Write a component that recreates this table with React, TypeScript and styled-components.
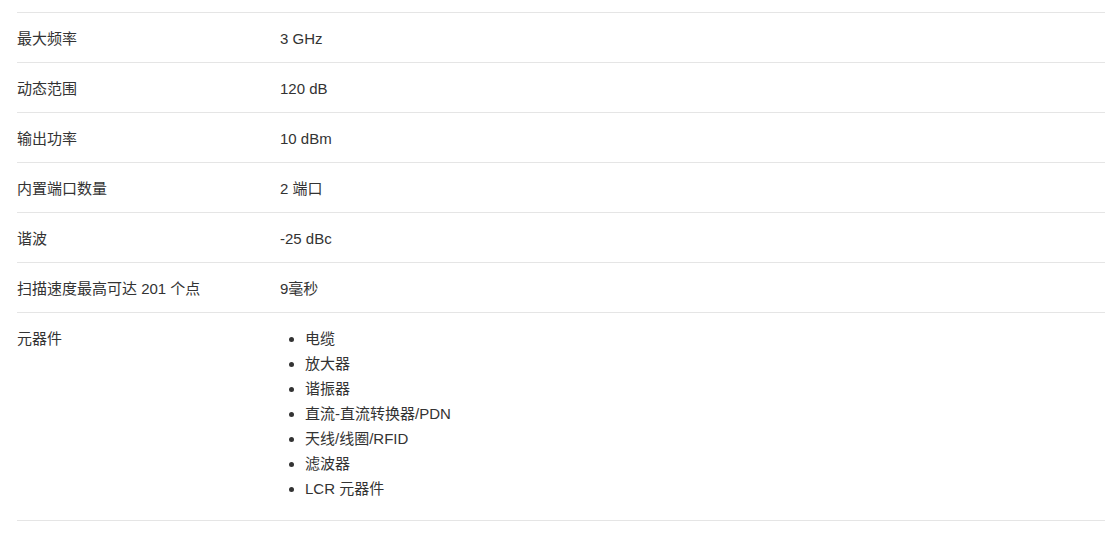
import styled, { createGlobalStyle } from 'styled-components';

const specs = [
  { label: '最大频率', value: '3 GHz' },
  { label: '动态范围', value: '120 dB' },
  { label: '输出功率', value: '10 dBm' },
  { label: '内置端口数量', value: '2 端口' },
  { label: '谐波', value: '-25 dBc' },
  { label: '扫描速度最高可达 201 个点', value: '9毫秒' },
];

const parts = ['电缆', '放大器', '谐振器', '直流-直流转换器/PDN', '天线/线圈/RFID', '滤波器', 'LCR 元器件'];

const GlobalStyle = createGlobalStyle`
  body {
    margin: 0;
    background: #ffffff;
    font-family: 'Liberation Sans', Arial, 'Noto Sans CJK SC', sans-serif;
    color: #333333;
  }
`;

export default function App() {
  return (
    <>
      <GlobalStyle />
      <Page>
        <Table>
          {specs.map((s) => (
            <Row key={s.label}>
              <Label>{s.label}</Label>
              <Value>{s.value}</Value>
            </Row>
          ))}
          <Row>
            <Label>元器件</Label>
            <Value>
              <List>
                {parts.map((p) => (
                  <li key={p}>{p}</li>
                ))}
              </List>
            </Value>
          </Row>
        </Table>
      </Page>
    </>
  );
}

const Page = styled.div`
  padding: 12px 0 0 17px;
`;

const Table = styled.div`
  display: flex;
  flex-direction: column;
  border-top: 1px solid #e5e5e5;
`;

const Row = styled.div`
  display: grid;
  grid-template-columns: 263px 1fr;
  padding: 13px 0 11px;
  border-bottom: 1px solid #e5e5e5;
  font-size: 15px;
  line-height: 25px;
`;

const Label = styled.div``;

const Value = styled.div``;

const List = styled.ul`
  margin: 0 0 8px;
  padding-left: 25px;
  list-style: disc;
`;
